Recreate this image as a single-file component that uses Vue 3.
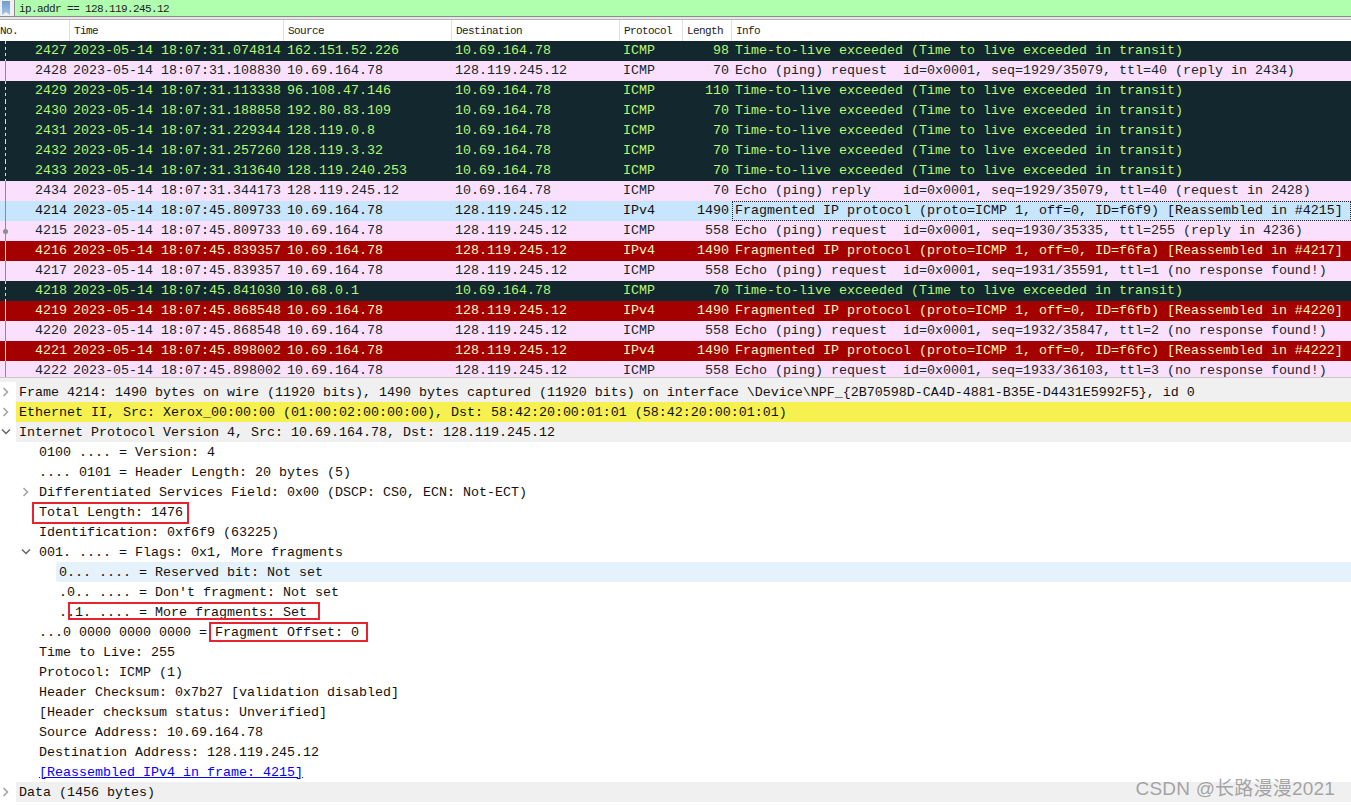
<script setup>
const T = 'Time-to-live exceeded (Time to live exceeded in transit)'
const rows = [
  ['d','2427','2023-05-14 18:07:31.074814','162.151.52.226','10.69.164.78','ICMP','98',T],
  ['p','2428','2023-05-14 18:07:31.108830','10.69.164.78','128.119.245.12','ICMP','70','Echo (ping) request  id=0x0001, seq=1929/35079, ttl=40 (reply in 2434)'],
  ['d','2429','2023-05-14 18:07:31.113338','96.108.47.146','10.69.164.78','ICMP','110',T],
  ['d','2430','2023-05-14 18:07:31.188858','192.80.83.109','10.69.164.78','ICMP','70',T],
  ['d','2431','2023-05-14 18:07:31.229344','128.119.0.8','10.69.164.78','ICMP','70',T],
  ['d','2432','2023-05-14 18:07:31.257260','128.119.3.32','10.69.164.78','ICMP','70',T],
  ['d','2433','2023-05-14 18:07:31.313640','128.119.240.253','10.69.164.78','ICMP','70',T],
  ['p','2434','2023-05-14 18:07:31.344173','128.119.245.12','10.69.164.78','ICMP','70','Echo (ping) reply    id=0x0001, seq=1929/35079, ttl=40 (request in 2428)'],
  ['s','4214','2023-05-14 18:07:45.809733','10.69.164.78','128.119.245.12','IPv4','1490','Fragmented IP protocol (proto=ICMP 1, off=0, ID=f6f9) [Reassembled in #4215]'],
  ['p m','4215','2023-05-14 18:07:45.809733','10.69.164.78','128.119.245.12','ICMP','558','Echo (ping) request  id=0x0001, seq=1930/35335, ttl=255 (reply in 4236)'],
  ['r','4216','2023-05-14 18:07:45.839357','10.69.164.78','128.119.245.12','IPv4','1490','Fragmented IP protocol (proto=ICMP 1, off=0, ID=f6fa) [Reassembled in #4217]'],
  ['p','4217','2023-05-14 18:07:45.839357','10.69.164.78','128.119.245.12','ICMP','558','Echo (ping) request  id=0x0001, seq=1931/35591, ttl=1 (no response found!)'],
  ['d','4218','2023-05-14 18:07:45.841030','10.68.0.1','10.69.164.78','ICMP','70',T],
  ['r','4219','2023-05-14 18:07:45.868548','10.69.164.78','128.119.245.12','IPv4','1490','Fragmented IP protocol (proto=ICMP 1, off=0, ID=f6fb) [Reassembled in #4220]'],
  ['p','4220','2023-05-14 18:07:45.868548','10.69.164.78','128.119.245.12','ICMP','558','Echo (ping) request  id=0x0001, seq=1932/35847, ttl=2 (no response found!)'],
  ['r','4221','2023-05-14 18:07:45.898002','10.69.164.78','128.119.245.12','IPv4','1490','Fragmented IP protocol (proto=ICMP 1, off=0, ID=f6fc) [Reassembled in #4222]'],
  ['p','4222','2023-05-14 18:07:45.898002','10.69.164.78','128.119.245.12','ICMP','558','Echo (ping) request  id=0x0001, seq=1933/36103, ttl=3 (no response found!)'],
]
const details = [
  { t:'Frame 4214: 1490 bytes on wire (11920 bits), 1490 bytes captured (11920 bits) on interface \\Device\\NPF_{2B70598D-CA4D-4881-B35E-D4431E5992F5}, id 0', c:'gray', a:'r', l:0 },
  { t:'Ethernet II, Src: Xerox_00:00:00 (01:00:02:00:00:00), Dst: 58:42:20:00:01:01 (58:42:20:00:01:01)', c:'yellow', a:'r', l:0 },
  { t:'Internet Protocol Version 4, Src: 10.69.164.78, Dst: 128.119.245.12', c:'gray', a:'d', l:0 },
  { t:'0100 .... = Version: 4', l:1 },
  { t:'.... 0101 = Header Length: 20 bytes (5)', l:1 },
  { t:'Differentiated Services Field: 0x00 (DSCP: CS0, ECN: Not-ECT)', a:'r', l:1 },
  { t:'Total Length: 1476', l:1 },
  { t:'Identification: 0xf6f9 (63225)', l:1 },
  { t:'001. .... = Flags: 0x1, More fragments', a:'d', l:1 },
  { t:'0... .... = Reserved bit: Not set', c:'blue', l:2 },
  { t:".0.. .... = Don't fragment: Not set", l:2 },
  { t:'..1. .... = More fragments: Set', l:2 },
  { t:'...0 0000 0000 0000 = Fragment Offset: 0', l:1 },
  { t:'Time to Live: 255', l:1 },
  { t:'Protocol: ICMP (1)', l:1 },
  { t:'Header Checksum: 0x7b27 [validation disabled]', l:1 },
  { t:'[Header checksum status: Unverified]', l:1 },
  { t:'Source Address: 10.69.164.78', l:1 },
  { t:'Destination Address: 128.119.245.12', l:1 },
  { t:'[Reassembled IPv4 in frame: 4215]', c:'link', l:1 },
  { t:'Data (1456 bytes)', c:'gray', a:'r', l:0 },
]
</script>

<template>
  <div class="app">
    <div class="filter">
      <div class="fbtn">
        <svg width="10" height="15" viewBox="0 0 10 15">
          <defs>
            <linearGradient id="bm" x1="0" y1="0" x2="0" y2="1">
              <stop offset="0" stop-color="#6f9bd1"/>
              <stop offset="1" stop-color="#a9c4e4"/>
            </linearGradient>
          </defs>
          <path d="M1 0h8v14L5 11 1 14z" fill="url(#bm)"/>
        </svg>
      </div>
      <span class="ftext">ip.addr == 128.119.245.12</span>
    </div>
    <div class="split"></div>
    <div class="head">
      <span class="h no">No.</span>
      <span class="h time">Time</span>
      <span class="h src">Source</span>
      <span class="h dst">Destination</span>
      <span class="h pro">Protocol</span>
      <span class="h len">Length</span>
      <span class="h info">Info</span>
    </div>
    <div class="list">
      <div v-for="r in rows" :key="r[1]" class="row" :class="r[0]">
        <span class="gut"></span>
        <span class="c no">{{ r[1] }}</span>
        <span class="c time">{{ r[2] }}</span>
        <span class="c src">{{ r[3] }}</span>
        <span class="c dst">{{ r[4] }}</span>
        <span class="c pro">{{ r[5] }}</span>
        <span class="c len">{{ r[6] }}</span>
        <span class="c info">{{ r[7] }}</span>
      </div>
    </div>
    <div class="split2"></div>
    <div class="tree">
      <div v-for="d in details" :key="d.t" class="node" :class="'l' + d.l">
        <span class="arrow">
          <svg v-if="d.a === 'r'" width="8" height="10" viewBox="0 0 8 10"><path d="M1.5 1l4 4-4 4" fill="none" stroke="#a0a0a0" stroke-width="1.5"/></svg>
          <svg v-else-if="d.a === 'd'" width="10" height="8" viewBox="0 0 10 8"><path d="M1 1.5l4 4 4-4" fill="none" stroke="#666" stroke-width="1.5"/></svg>
        </span>
        <span class="label" :class="d.c">{{ d.t }}</span>
      </div>
    </div>
    <span class="box b1"></span>
    <span class="box b2"></span>
    <span class="box b3"></span>
    <span class="mark-wm">CSDN @长路漫漫2021</span>
  </div>
</template>

<style>
html, body { margin: 0; background: #fff; overflow: hidden; }
</style>

<style scoped>
.app {
  position: relative;
  width: 1351px;
  height: 805px;
  overflow: hidden;
  background: #fff;
  font-family: "Liberation Mono", monospace;
  font-size: 13.33px;
  color: #111;
  white-space: pre;
}
.filter {
  height: 16px;
  background: #afffaf;
  display: flex;
  align-items: center;
}
.fbtn {
  width: 15px;
  height: 16px;
  flex: none;
  box-sizing: border-box;
  background: #f0f0f0;
  border-right: 1px solid #8c8c8c;
  padding: 1px 0 0 1px;
  display: flex;
}
.ftext { margin-left: 4px; padding-top: 1px; font-size: 11px; letter-spacing: -0.6px; color: #222; }
.split { height: 4px; border-top: 1px solid #8c8c8c; border-bottom: 1px solid #b4b4b4; background: #e6e6e6; box-sizing: border-box; }
.head {
  height: 21px;
  display: flex;
  align-items: center;
  font-size: 11px;
  letter-spacing: -0.6px;
  background: #fff;
}
.h { height: 21px; line-height: 23px; box-sizing: border-box; border-right: 1px solid #e0e0e0; padding-left: 4px; color: #222; flex: none; }
.head .no { width: 70px; padding-left: 0; }
.time { width: 214px; }
.src { width: 168px; }
.dst { width: 168px; }
.pro { width: 63px; }
.len { width: 49px; }
.head .info { flex: 1; border-right: 0; }
.list { height: 336px; overflow: hidden; }
.row { height: 20px; line-height: 19px; display: flex; position: relative; }
.c { flex: none; box-sizing: border-box; padding-left: 3px; overflow: hidden; }
.row .no { width: 52px; text-align: right; padding: 0 3px 0 0; margin-left: 18px; }
.row .len { padding: 0 3px 0 0; text-align: right; }
.row .info { padding-left: 3px; flex: 1; }
.gut { position: absolute; left: 5px; top: 0; bottom: 0; width: 1px; background: #8c8c8c; }
.d { background: #12272e; color: #b7f774; }
.d .gut { background: repeating-linear-gradient(#ddd 0 3px, transparent 3px 6px); }
.p { background: #fbe0fd; color: #12272e; }
.s { background: #c7e5fd; color: #111; }
.s .info { outline: 1px dotted #222; outline-offset: -1px; }
.r { background: #a40000; color: #fff6c0; }
.r .gut { background: #e8e8e8; }
.m .gut::after { content: ""; position: absolute; left: -2px; top: 8px; width: 5px; height: 5px; border-radius: 50%; background: #8c8c8c; }
.split2 { height: 5px; background: #f0f0f0; border-top: 1px solid #c8c8c8; box-sizing: border-box; }
.tree { display: flex; flex-direction: column; }
.node { height: 20px; line-height: 22px; display: flex; }
.arrow { flex: none; display: flex; align-items: center; justify-content: center; }
.l0 .arrow { width: 11px; margin-right: 5px; }
.l1 .arrow { margin-left: 20px; width: 11px; margin-right: 8px; }
.l2 .arrow { margin-left: 39px; width: 17px; }
.label { flex: 1; color: #111; height: 20px; }
.l0 .label { padding-left: 3px; }
.l2 .label { padding-left: 3px; }
.gray { background: #f0f0f0; }
.yellow { background: #f6f14e; }
.blue { background: #e5f2fc; border-radius: 3px 0 0 3px; }
.link { color: #0000ff; text-decoration: underline; }
.box { position: absolute; border: 2px solid #e8222e; box-sizing: border-box; }
.b1 { left: 32px; top: 502px; width: 157px; height: 22px; }
.b2 { left: 68px; top: 602px; width: 252px; height: 18px; }
.b3 { left: 209px; top: 622px; width: 159px; height: 20px; }
.mark-wm {
  position: absolute; right: 16px; top: 773px;
  font: 19px "Liberation Sans", "Noto Sans CJK SC", sans-serif;
  letter-spacing: 0.2px;
  color: rgba(110, 110, 110, 0.6);
}
</style>
